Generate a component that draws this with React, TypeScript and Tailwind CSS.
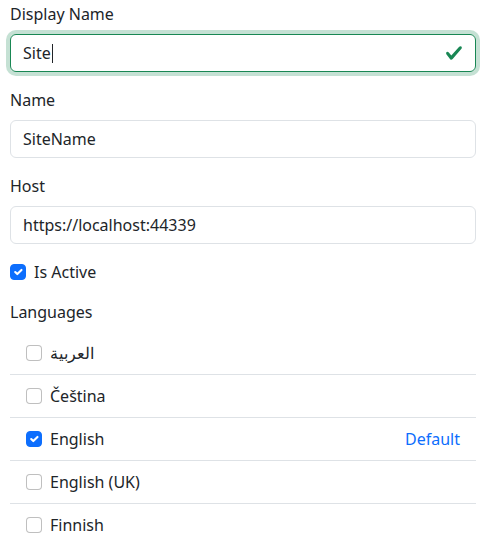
import React from "react";

const font = { fontFamily: '"Segoe UI", "Noto Sans", sans-serif' };

function Check({ checked }: { checked?: boolean }) {
  if (checked) {
    return (
      <span className="w-4 h-4 rounded-[4px] bg-[#0d6efd] border border-[#0d6efd] flex items-center justify-center shrink-0">
        <svg viewBox="0 0 20 20" width="16" height="16">
          <path fill="none" stroke="#fff" strokeLinecap="round" strokeLinejoin="round" strokeWidth="3" d="m6 10 3 3 6-6" />
        </svg>
      </span>
    );
  }
  return <span className="w-4 h-4 rounded-[4px] border border-[rgba(0,0,0,0.25)] bg-white shrink-0" />;
}

const langs = [
  { name: "العربية", checked: false },
  { name: "Čeština", checked: false },
  { name: "English", checked: true, def: true },
  { name: "English (UK)", checked: false },
  { name: "Finnish", checked: false },
];

export default function App() {
  return (
    <div className="w-[486px] h-[543px] overflow-hidden bg-white text-[#212529] text-[16px] leading-6 pt-[2px] px-[10px]" style={font}>
      <div className="mb-4">
        <div className="mb-2 h-6">Display Name</div>
        <div className="h-[38px] rounded-[6px] border border-[#198754] shadow-[0_0_0_4px_rgba(25,135,84,0.25)] flex items-center pl-3 pr-3 justify-between">
          <span className="flex items-center">Site<span className="inline-block w-px h-[19px] bg-[#212529] ml-px" /></span>
          <svg viewBox="0 0 8 8" width="18" height="18">
            <path fill="#198754" d="M2.3 6.73.6 4.53c-.4-1.04.46-1.4 1.1-.8l1.1 1.4 3.4-3.8c.6-.63 1.6-.27 1.2.7l-4 4.6c-.43.5-.8.4-1.1.1z" />
          </svg>
        </div>
      </div>
      <div className="mb-4">
        <div className="mb-2 h-6">Name</div>
        <div className="h-[38px] rounded-[6px] border border-[#dee2e6] flex items-center px-3">SiteName</div>
      </div>
      <div className="mb-4">
        <div className="mb-2 h-6">Host</div>
        <div className="h-[38px] rounded-[6px] border border-[#dee2e6] flex items-center px-3">https://localhost:44339</div>
      </div>
      <div className="mb-4 h-6 flex items-center gap-2">
        <Check checked />
        <span>Is Active</span>
      </div>
      <div className="mb-2 h-6">Languages</div>
      <div className="flex flex-col">
        {langs.map((l, i) => (
          <div
            key={l.name}
            className={`h-[42px] flex items-center px-4 gap-2 box-content ${i > 0 ? "border-t border-[#dee2e6]" : ""}`}
          >
            <Check checked={l.checked} />
            <span className="flex-1">{l.name}</span>
            {l.def && <span className="text-[#0d6efd]">Default</span>}
          </div>
        ))}
      </div>
    </div>
  );
}
